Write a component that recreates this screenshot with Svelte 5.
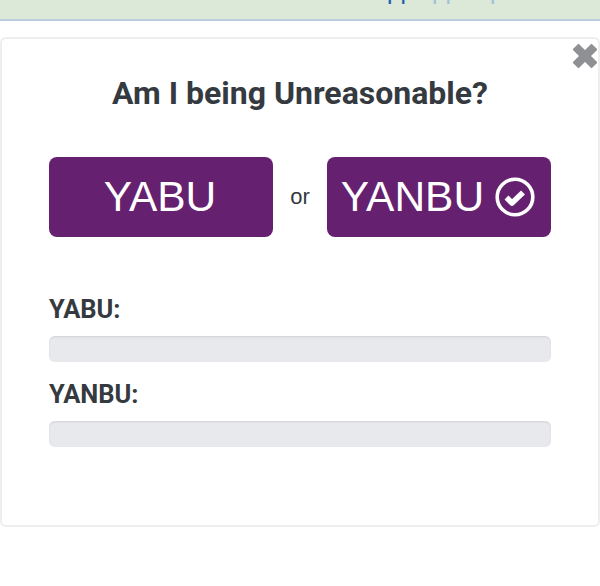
<script>
	const results = [
		{ label: 'YABU:', value: 0 },
		{ label: 'YANBU:', value: 0 }
	];
</script>

<header class="banner">
	<span class="cut-text"><span class="dark">pp</span><span class="pale">pp</span><span class="pale far">p</span></span>
</header>

<main class="modal">
	<button class="close" aria-label="Close">
		<svg viewBox="0 0 28 28" width="26" height="26">
			<path d="M2 7 7 2 14 9 21 2 26 7 19 14 26 21 21 26 14 19 7 26 2 21 9 14Z" fill="#8f9094" stroke="#8f9094" stroke-width="2" stroke-linejoin="round" />
		</svg>
	</button>

	<h1>Am I being Unreasonable?</h1>

	<div class="vote">
		<button class="choice">YABU</button>
		<span class="or">or</span>
		<button class="choice">
			YANBU
			<svg class="tick" viewBox="0 0 40 40" width="40" height="40">
				<circle cx="20" cy="20" r="17.8" fill="none" stroke="#fff" stroke-width="3.6" />
				<path d="M11.5 20.5 17 26 28 15.5" fill="none" stroke="#fff" stroke-width="5.6" stroke-linejoin="round" />
			</svg>
		</button>
	</div>

	<section class="results">
		{#each results as r}
			<h2>{r.label}</h2>
			<div class="bar"><div class="fill" style="width: {r.value}%"></div></div>
		{/each}
	</section>
</main>

<style>
	:global(body) {
		background: #fff;
		font-family: "Liberation Sans", Arial, sans-serif;
	}

	.banner {
		height: 19px;
		background: #dce8d8;
		border-bottom: 2px solid #bccfdf;
		overflow: hidden;
		padding-left: 387px;
	}

	.cut-text {
		display: block;
		margin-top: -21px;
		font: 24px/24px Roboto, sans-serif;
		white-space: nowrap;
	}

	.dark {
		color: #1f5fa8;
	}

	.pale {
		margin-left: 18px;
		color: #9cc4d8;
	}

	.far {
		margin-left: 31px;
	}

	.modal {
		position: relative;
		box-sizing: border-box;
		height: 490px;
		margin-top: 16px;
		padding: 36px 47px 0;
		background: #fff;
		border: 2px solid #eeeeef;
		border-radius: 6px;
		color: #343a40;
	}

	.close {
		position: absolute;
		top: 4px;
		right: 0;
		padding: 0;
		border: 0;
		background: none;
	}

	.close svg {
		display: block;
	}

	h1 {
		margin: 0;
		font: 700 32px/36px Roboto, sans-serif;
		text-align: center;
	}

	.vote {
		display: flex;
		align-items: center;
		margin-top: 46px;
	}

	.or {
		flex: 1;
		font-size: 22px;
		text-align: center;
	}

	.choice {
		display: flex;
		align-items: center;
		justify-content: center;
		gap: 11px;
		box-sizing: border-box;
		width: 224px;
		height: 80px;
		padding: 0 2px 0 0;
		border: 0;
		border-radius: 8px;
		background: #662070;
		color: #fff;
		font: 42.5px "Liberation Sans", Arial, sans-serif;
	}

	.results {
		margin-top: 57px;
	}

	h2 {
		margin: 0;
		font: 700 25.5px/30px Roboto, sans-serif;
	}

	.bar {
		height: 26px;
		margin: 12px 0 17px;
		background: #e8e9ed;
		border-radius: 6px;
		box-shadow: inset 0 1px 2px rgba(0, 0, 0, 0.1);
		overflow: hidden;
	}

	.fill {
		height: 100%;
		background: #662070;
	}
</style>
